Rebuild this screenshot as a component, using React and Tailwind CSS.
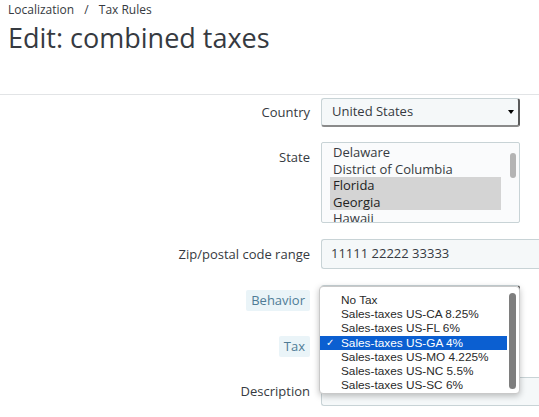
import React from 'react';

const states = [
    { name: 'Delaware', selected: false },
    { name: 'District of Columbia', selected: false },
    { name: 'Florida', selected: true },
    { name: 'Georgia', selected: true },
    { name: 'Hawaii', selected: false },
];

const taxes = [
    'No Tax',
    'Sales-taxes US-CA 8.25%',
    'Sales-taxes US-FL 6%',
    'Sales-taxes US-GA 4%',
    'Sales-taxes US-MO 4.225%',
    'Sales-taxes US-NC 5.5%',
    'Sales-taxes US-SC 6%',
];

function Label({ children, hint }) {
    return (
        <div className="w-[310px] shrink-0 flex justify-end">
            {hint ? (
                <span className="bg-[#eaf4f8] text-[#4f7c96] px-[5px] leading-[21px] rounded-[2px]">{children}</span>
            ) : (
                <span className="text-[#363a41] leading-[21px]">{children}</span>
            )}
        </div>
    );
}

export default function App() {
    return (
        <div className="w-[539px] h-[417px] overflow-hidden bg-white text-[13px] text-[#363a41]" style={{ fontFamily: '"Open Sans", sans-serif' }}>
            <div className="px-[8px] pt-[1px] h-[94px]">
                <div className="text-[12px] leading-[18px] text-[#363a41]">
                    Localization <span className="mx-[7px]">/</span> Tax Rules
                </div>
                <h1 className="text-[27px] leading-[34px] mt-[2px] text-[#363a41]">Edit: combined taxes</h1>
            </div>
            <div className="border-t border-[#e2e4e6] pt-[3px]">
                {/* Country */}
                <div className="flex items-center h-[29px] mb-[15px]">
                    <Label>Country</Label>
                    <div className="ml-[11px] w-[199px] h-[29px] bg-[#f5f8f9] border border-[#c8d3d6] border-r-[2px] border-b-[2px] border-r-[#5a5a5a] border-b-[#8a8a8a] rounded-[3px] flex items-center justify-between pl-[10px] pr-[4px]">
                        <span>United States</span>
                        <span className="w-0 h-0 border-l-[3px] border-r-[3px] border-t-[4px] border-l-transparent border-r-transparent border-t-black"></span>
                    </div>
                </div>
                {/* State */}
                <div className="flex items-start mb-[16px]">
                    <div className="pt-[5px] flex"><Label>State</Label></div>
                    <div className="ml-[11px] w-[199px] h-[81px] bg-[#fafbfc] border border-[#c8d3d6] rounded-[2px] relative overflow-hidden pl-[8px] pr-[18px] pt-[1px]">
                        {states.map((s) => (
                            <div key={s.name} className={`leading-[16.6px] pl-[3px] ${s.selected ? 'bg-[#d4d4d4] text-[#222]' : ''}`}>{s.name}</div>
                        ))}
                        <div className="absolute right-[3px] top-[10px] w-[6px] h-[25px] rounded-full bg-[#b4b4b4]"></div>
                    </div>
                </div>
                {/* Zip */}
                <div className="flex items-center h-[30px] mb-[16px]">
                    <Label>Zip/postal code range</Label>
                    <div className="ml-[11px] flex-1 h-[30px] bg-[#f5f8f9] border border-[#c8d3d6] border-r-0 rounded-l-[3px] flex items-center pl-[9px]">
                        11111 22222 33333
                    </div>
                </div>
                {/* Behavior + Tax + Description, popup on top */}
                <div className="relative">
                    <div className="flex items-center h-[30px] mb-[16px]">
                        <Label hint>Behavior</Label>
                        <div className="ml-[11px] w-[199px] h-[30px] bg-[#f5f8f9] border border-[#c8d3d6] border-r-[2px] border-r-[#5a5a5a] rounded-[3px]"></div>
                    </div>
                    <div className="flex items-center h-[30px] mb-[16px]">
                        <Label hint>Tax</Label>
                        <div className="ml-[11px] w-[199px] h-[30px] bg-[#f5f8f9] border border-[#c8d3d6] rounded-[3px]"></div>
                    </div>
                    <div className="flex items-center h-[29px]">
                        <Label>Description</Label>
                        <div className="ml-[11px] flex-1 h-[29px] bg-[#f5f8f9] border border-[#c8d3d6] border-r-0 rounded-l-[3px]"></div>
                    </div>

                    <div
                        className="absolute left-[319px] top-[1px] w-[201px] h-[108px] bg-white border border-[#c9c9c9] rounded-[4px] shadow-[0_2px_6px_rgba(0,0,0,0.25)] pt-[6px] text-[11.8px] text-[#2a2a2a]"
                        style={{ fontFamily: '"Liberation Sans", Arial, sans-serif' }}
                    >
                        {taxes.map((t, i) => (
                            <div key={t} className={`relative h-[14.2px] leading-[14.2px] pl-[21px] w-[187px] ${i === 3 ? 'bg-[#0b5fd1] text-white' : ''}`}>
                                {i === 3 && <span className="absolute left-[6px] top-0 text-[10px]">✓</span>}
                                {t}
                            </div>
                        ))}
                        <div className="absolute right-[3px] top-[6px] w-[7px] h-[96px] rounded-full bg-[#7e7e7e]"></div>
                    </div>
                </div>
            </div>
        </div>
    );
}
